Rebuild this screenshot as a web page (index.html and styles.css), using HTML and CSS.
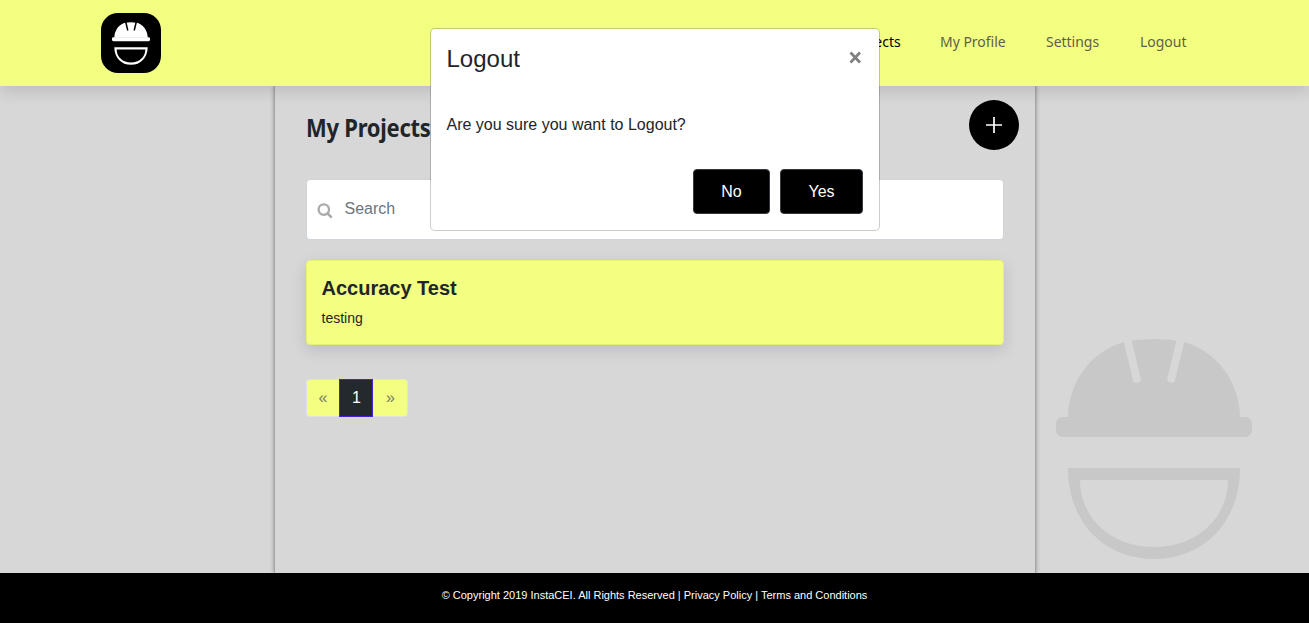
FILE: index.html
```html
<!DOCTYPE html>
<html lang="en">
<head>
<meta charset="utf-8">
<title>My Projects</title>
<link rel="stylesheet" href="styles.css">
</head>
<body>
<svg class="defs" aria-hidden="true">
  <symbol id="helmet" viewBox="0 0 196 220">
    <path fill="currentColor" d="M12 80C12 42 36 12 68 3Q98-3 128 3C160 12 184 42 184 80Z"/>
    <rect fill="currentColor" y="78" width="196" height="20" rx="7"/>
    <path class="groove" d="M70-5L80.700 39.700M126-5L115.300 39.700"/>
    <path fill="currentColor" fill-rule="evenodd" d="M12 129H184C184 184 147 220 98 220S12 184 12 129ZM24 141C24 180 56 208 98 208S172 180 172 141Z"/>
  </symbol>
</svg>
<header class="header">
  <div class="logo"><svg class="logo-icon"><use href="#helmet"/></svg></div>
  <nav class="nav">
    <a class="active w-projects"><span>My Projects</span></a>
    <a class="w-profile"><span>My Profile</span></a>
    <a class="w-settings"><span>Settings</span></a>
    <a class="w-logout"><span>Logout</span></a>
  </nav>
</header>
<main class="main">
  <section class="panel">
    <div class="title-row">
      <h1>My Projects</h1>
      <button class="add" aria-label="Add project"><svg width="18" height="18"><path d="M9 1v16M1 9h16" stroke="#fff" stroke-width="1.700"/></svg></button>
    </div>
    <div class="search">
      <svg width="16" height="16" viewBox="0 0 16 16" fill="none" stroke="#aaa"><circle cx="6.800" cy="6.600" r="5.200" stroke-width="2.300"/><path d="M10.500 10.300L14 13.800" stroke-width="2.600" stroke-linecap="round"/></svg>
      <span>Search</span>
    </div>
    <article class="card">
      <h2>Accuracy Test</h2>
      <p>testing</p>
    </article>
    <div class="pages"><span class="prev">«</span><span class="current">1</span><span class="next">»</span></div>
  </section>
  <svg class="watermark"><use href="#helmet"/></svg>
</main>
<footer class="footer">© Copyright 2019 InstaCEI. All Rights Reserved | Privacy Policy | Terms and Conditions</footer>
<div class="modal" role="dialog">
  <div class="modal-head"><h3>Logout</h3><svg class="close" width="13" height="13"><path d="M1.500 1.500l9.500 10M11 1.500l-9.500 10" stroke="#7f7f7f" stroke-width="2.700"/></svg></div>
  <p class="question">Are you sure you want to Logout?</p>
  <div class="actions"><button class="no">No</button><button class="yes">Yes</button></div>
</div>
</body>
</html>
```
FILE: styles.css
```css
* { box-sizing: border-box; }
body {
  margin: 0;
  height: 623px;
  overflow: hidden;
  display: flex;
  flex-direction: column;
  background: #d7d7d7;
  color: #212529;
  font: 16px/24px "Liberation Sans", sans-serif;
}
h1, h2, h3, p { margin: 0; }
button { font: inherit; border: 0; padding: 0; }
.defs { position: absolute; width: 0; height: 0; }
.groove { fill: none; stroke: var(--groove); stroke-width: 8; stroke-linecap: round; }

.header {
  position: relative;
  z-index: 1;
  flex: none;
  height: 86px;
  padding: 0 121px 0 101px;
  display: flex;
  justify-content: space-between;
  align-items: center;
  background: #f2ff80;
  box-shadow: 0 5px 15px rgba(0, 0, 0, .13);
}
.logo {
  width: 60px;
  height: 60px;
  border-radius: 17px;
  background: #000;
  color: #fff;
  --groove: #000;
  display: flex;
  justify-content: center;
  align-items: center;
}
.logo-icon { width: 38px; height: 43px; }
.logo .groove { stroke-width: 10; }
.nav {
  display: flex;
  gap: 40px;
  padding-bottom: 5px;
  font: 15px/24px "Noto Sans", sans-serif;
  color: #5e5e4d;
}
.nav a { white-space: nowrap; }
.nav span { display: inline-block; transform: scaleX(.93); transform-origin: left; }
.nav .active { color: #000; }
.w-projects { width: 75px; }
.w-profile { width: 66px; }
.w-settings { width: 54px; }
.w-logout { width: 48px; }

.main { flex: 1; display: flex; padding-left: 274px; }
.panel {
  flex: none;
  width: 762px;
  padding: 14px 31px 0;
  border: solid #a5a5a5;
  border-width: 0 1px;
  box-shadow: 0 0 4px rgba(0, 0, 0, .35);
}
.title-row {
  height: 50px;
  margin-right: -15px;
  display: flex;
  justify-content: space-between;
  align-items: center;
}
h1 {
  font: bold 25px/36px "Noto Sans", sans-serif;
  letter-spacing: -.3px;
  padding-top: 4px;
  transform: scaleX(.88);
  transform-origin: left;
}
.add {
  width: 50px;
  height: 50px;
  border-radius: 50%;
  background: #000;
  display: flex;
  align-items: center;
  justify-content: center;
}
.search {
  height: 61px;
  margin-top: 28.5px;
  border: 1px solid #ced4da;
  border-radius: 4px;
  background: #fff;
  color: #6c757d;
  display: flex;
  align-items: center;
  gap: 12px;
  padding: 0 9.5px;
}
.search svg { margin-top: 3px; }
.search span { padding-bottom: 1px; }
.card {
  height: 85px;
  margin-top: 20.5px;
  padding: 14px 14.5px;
  border: 1px solid #e3f075;
  border-radius: 4px;
  background: #f2ff80;
  box-shadow: 0 5px 15px rgba(0, 0, 0, .13);
}
.card h2 { font-size: 20px; line-height: 26px; }
.card p { font-size: 14px; line-height: 20px; margin-top: 7px; }
.pages { display: flex; margin-top: 34px; height: 38px; width: 102px; }
.pages span {
  width: 34px;
  display: flex;
  align-items: center;
  justify-content: center;
  background: #f2ff80;
  border: 1px solid #dee2e6;
  color: #777d62;
}
.pages .prev { border-radius: 4px 0 0 4px; border-right: 0; width: 33px; }
.pages .next { border-radius: 0 4px 4px 0; border-left: 0; width: 35px; padding-left: 1px; }
.pages .current { background: #24292d; color: #fff; border-color: #4a20d8; padding-left: 1px; }
.watermark {
  width: 196px;
  height: 220px;
  margin: 253px 0 0 20px;
  color: #c8c8c8;
  --groove: #d7d7d7;
}
.footer {
  flex: none;
  height: 50px;
  background: #000;
  color: #fff;
  text-align: center;
  font-size: 11px;
  line-height: 44px;
}

.modal {
  position: absolute;
  z-index: 2;
  left: 430px;
  top: 28px;
  width: 450px;
  height: 203px;
  padding: 15px 16px 15px 15.5px;
  border: 1px solid rgba(0, 0, 0, .2);
  border-radius: 5px;
  background: #fff;
  background-clip: padding-box;
}
.modal-head { display: flex; justify-content: space-between; }
h3 { font-size: 24px; line-height: 30px; font-weight: 400; }
.close { margin: 7px 1px 0 0; }
.question { margin-top: 39px; }
.actions { display: flex; justify-content: flex-end; gap: 10px; margin-top: 32px; }
.actions button {
  height: 45px;
  background: #000;
  color: #fff;
  border: 1px solid #343a40;
  border-radius: 4px;
}
.no { width: 77px; }
.yes { width: 83px; }
```
